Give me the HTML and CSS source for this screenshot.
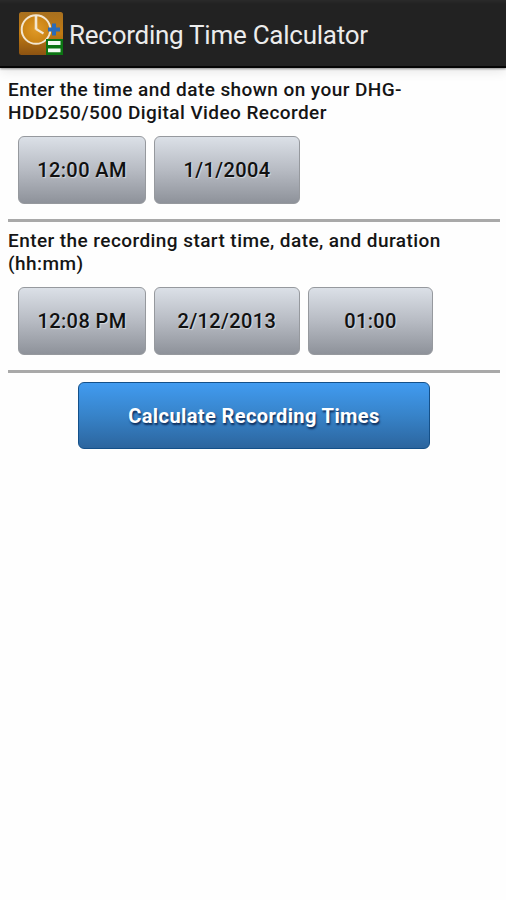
FILE: index.html
```html
<!DOCTYPE html>
<html lang="en">

<head>
    <meta charset="UTF-8">
    <meta name="viewport" content="width=device-width, initial-scale=1.0">
    <title>Recording Time Calculator</title>
    <link rel="stylesheet" href="styles.css">
</head>

<body>
    <header class="header">
        <svg class="logo" viewBox="0 0 44 44">
            <defs>
                <linearGradient id="gold" x1="0" y1="0" x2="0" y2="1">
                    <stop offset="0" stop-color="#a8701f" />
                    <stop offset="0.5" stop-color="#c07a12" />
                    <stop offset="1" stop-color="#8c5312" />
                </linearGradient>
                <radialGradient id="face">
                    <stop offset="0" stop-color="#e09a28" />
                    <stop offset="1" stop-color="#c98213" />
                </radialGradient>
            </defs>
            <rect width="44" height="43" rx="2.500" fill="url(#gold)" />
            <circle cx="17" cy="17.500" r="14.300" fill="url(#face)" stroke="#f3e6d0" stroke-width="2" />
            <path d="M17 4V17.500" stroke="#f3e6d0" stroke-width="2.600" />
            <path d="M17 17L24.500 21.500" stroke="#f3e6d0" stroke-width="2.200" />
            <path d="M35 11.500V23.500M29 17.500H41" stroke="#2b6bb8" stroke-width="4" />
            <rect x="27" y="27" width="17" height="16" fill="#0b7512" />
            <path d="M29 31H41.500M29 38.300H41.500" stroke="#f4fbf4" stroke-width="3.800" />
        </svg>
        <h1 class="title">Recording Time Calculator</h1>
    </header>

    <main class="content">
        <section class="section">
            <p class="label">Enter the time and date shown on your DHG-HDD250/500 Digital Video Recorder</p>
            <div class="btn-row">
                <button class="btn btn-time">12:00 AM</button>
                <button class="btn btn-date">1/1/2004</button>
            </div>
        </section>
        <section class="section">
            <p class="label">Enter the recording start time, date, and duration (hh:mm)</p>
            <div class="btn-row">
                <button class="btn btn-time">12:08 PM</button>
                <button class="btn btn-date">2/12/2013</button>
                <button class="btn btn-duration">01:00</button>
            </div>
        </section>
        <button class="btn btn-calculate">Calculate Recording Times</button>
    </main>
</body>

</html>
```
FILE: styles.css
```css
* {
    box-sizing: border-box;
}

body {
    margin: 0;
    background-color: #fefefe;
    font-family: Roboto, sans-serif;
    color: #151515;
}

.header {
    display: flex;
    height: 68px;
    padding: 12px 0 0 19px;
    background: linear-gradient(#2a2a2a, #222 4px);
    border-bottom: 2px solid #050505;
    box-shadow: 0 1px 2px rgba(0, 0, 0, 0.4), 0 2px 12px rgba(0, 0, 0, 0.12);
}

.logo {
    width: 44px;
    height: 44px;
}

.title {
    margin: 7px 0 0 6px;
    font-size: 26px;
    font-weight: 400;
    line-height: 32px;
    letter-spacing: -0.26px;
    color: #ececec;
    white-space: nowrap;
}

.content {
    padding: 10px 6px 0 8px;
}

.section {
    height: 144px;
    margin-bottom: 7px;
    border-bottom: 3px solid #a9a9a9;
}

.label {
    margin: 0;
    font-size: 19px;
    font-weight: 500;
    line-height: 23px;
    letter-spacing: 0.43px;
}

.btn-row {
    display: flex;
    gap: 8px;
    padding: 12px 0 0 10px;
}

.btn {
    height: 68px;
    padding: 0;
    border: 1px solid #96999e;
    border-radius: 6px;
    background: linear-gradient(#dbe0e7, #b7bbc3 50%, #8e929a);
    font-family: inherit;
    font-size: 20px;
    font-weight: 500;
    color: #111;
    text-shadow: 1px 1px 1px rgba(255, 255, 255, 0.5);
    letter-spacing: 0.4px;
}

.btn-time {
    width: 128px;
}

.btn-date {
    width: 146px;
}

.btn-duration {
    width: 125px;
}

.btn-calculate {
    display: block;
    width: 352px;
    height: 67px;
    margin: 9px 0 0 70px;
    border-color: #145089;
    background: linear-gradient(#419bf0, #3783c9 50%, #2c659e);
    color: #fff;
    font-weight: 700;
    text-shadow: 1px 2px 2px rgba(0, 20, 60, 0.8);
}
```
